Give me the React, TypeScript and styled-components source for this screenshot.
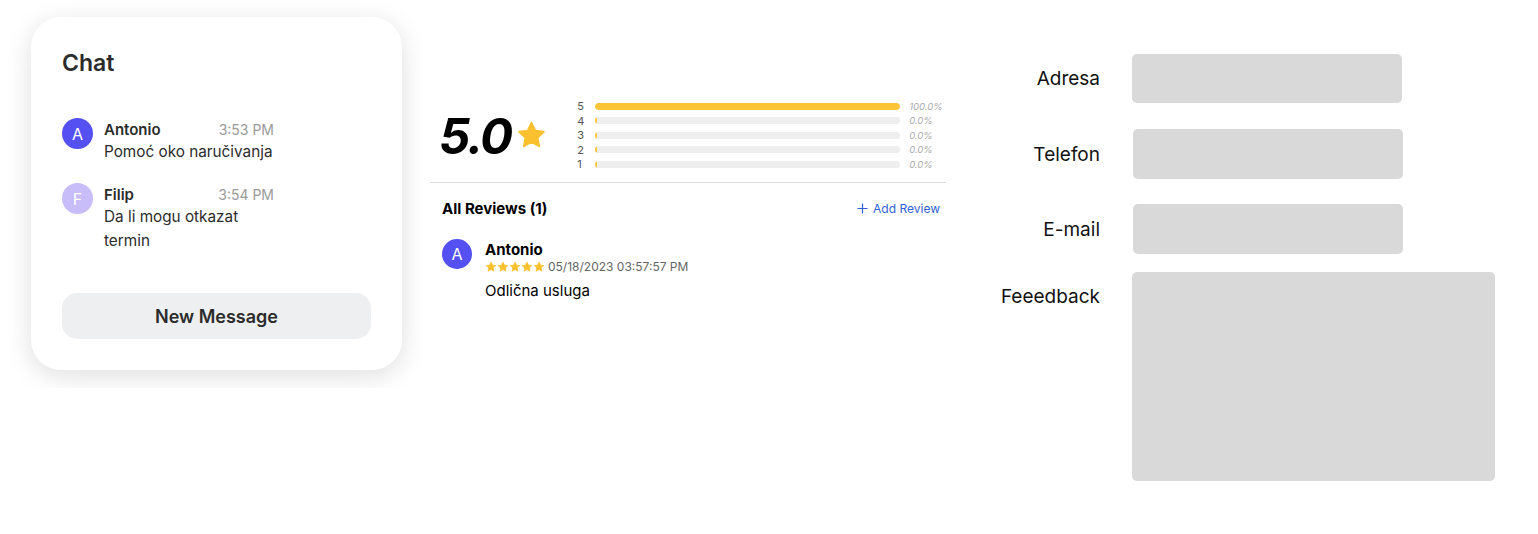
import React from "react";
import styled, { createGlobalStyle } from "styled-components";

const Global = createGlobalStyle`
  html, body { margin: 0; padding: 0; background: #ffffff; }
  body { font-family: Inter, "Noto Sans", sans-serif; color: #111; }
`;

const Page = styled.div`
  display: flex;
  align-items: flex-start;
  width: 1538px;
  height: 534px;
`;

/* ---------- Chat ---------- */
const ChatFrame = styled.div`
  width: 425px;
  height: 388px;
  overflow: hidden;
  padding: 17px 23px 0 31px;
  box-sizing: border-box;
  flex-shrink: 0;
`;

const ChatCard = styled.div`
  width: 371px;
  height: 353px;
  box-sizing: border-box;
  background: #fff;
  border-radius: 30px;
  box-shadow: 0 6px 26px rgba(0, 0, 0, 0.13);
  padding: 32px 31px 0 31px;
  display: flex;
  flex-direction: column;
`;

const ChatTitle = styled.h2`
  margin: 0;
  font-size: 23px;
  line-height: 28px;
  font-weight: 600;
  color: #2b2b2b;
`;

const MessageList = styled.div`
  display: flex;
  flex-direction: column;
  gap: 21px;
  margin-top: 43px;
`;

const MessageRow = styled.div`
  display: flex;
  gap: 11px;
`;

const Avatar = styled.div<{ $bg: string; $size?: number }>`
  width: ${(p) => p.$size ?? 31}px;
  height: ${(p) => p.$size ?? 31}px;
  border-radius: 50%;
  background: ${(p) => p.$bg};
  color: #fff;
  font-size: 16px;
  display: flex;
  align-items: center;
  justify-content: center;
  flex-shrink: 0;
  margin-top: -2px;
`;

const MessageBody = styled.div`
  width: 170px;
  display: flex;
  flex-direction: column;
`;

const MessageHead = styled.div`
  display: flex;
  justify-content: space-between;
  align-items: baseline;
  height: 20px;
`;

const SenderName = styled.span`
  font-size: 15px;
  font-weight: 600;
  color: #2b2b2b;
`;

const Time = styled.span`
  font-size: 14px;
  color: #9a9a9a;
`;

const MessageText = styled.div`
  font-size: 15.3px;
  line-height: 24px;
  color: #2b2b2b;
  white-space: pre-line;
`;

const NewMessageButton = styled.button`
  margin-top: auto;
  margin-bottom: 31px;
  height: 46px;
  border: none;
  border-radius: 15px;
  background: #eeeff1;
  font-family: Inter, sans-serif;
  font-size: 18px;
  font-weight: 600;
  color: #2b2b2b;
  cursor: pointer;
`;

/* ---------- Reviews ---------- */
const ReviewPanel = styled.div`
  width: 516px;
  margin-left: 5px;
  margin-top: 98px;
  flex-shrink: 0;
  font-family: Inter, sans-serif;
`;

const Summary = styled.div`
  display: flex;
  align-items: center;
  padding-left: 9px;
  height: 76px;
  border-bottom: 1px solid #dcdcdc;
  padding-bottom: 8px;
  box-sizing: content-box;
`;

const Score = styled.div`
  font-size: 49px;
  font-weight: 700;
  font-style: italic;
  letter-spacing: -2px;
  color: #000;
  line-height: 1;
`;

const BigStar = styled.svg`
  width: 31px;
  height: 31px;
  margin-left: 5px;
  margin-top: -2px;
`;

const Bars = styled.div`
  display: flex;
  flex-direction: column;
  margin-left: 30px;
  margin-top: -2px;
`;

const BarRow = styled.div`
  display: grid;
  grid-template-columns: 18px 305px auto;
  align-items: center;
  height: 14.5px;
`;

const BarLabel = styled.span`
  font-size: 11px;
  color: #555;
`;

const Track = styled.div`
  height: 7px;
  border-radius: 4px;
  background: #eeeeee;
  overflow: hidden;
`;

const Fill = styled.div`
  height: 100%;
  border-radius: 4px;
  background: #fbc537;
  min-width: 2px;
`;

const Percent = styled.span`
  font-size: 9.5px;
  font-style: italic;
  color: #aaa;
  margin-left: 9px;
`;

const ReviewsHeader = styled.div`
  display: flex;
  justify-content: space-between;
  align-items: center;
  padding: 16px 6px 0 12px;
`;

const ReviewsTitle = styled.span`
  font-size: 15px;
  font-weight: 700;
  color: #000;
`;

const AddReview = styled.span`
  font-size: 12px;
  color: #2e5fd6;
  display: flex;
  align-items: center;
  gap: 5px;
`;

const ReviewItem = styled.div`
  display: flex;
  gap: 13px;
  padding: 23px 0 0 12px;
`;

const ReviewBody = styled.div`
  display: flex;
  flex-direction: column;
`;

const ReviewName = styled.span`
  font-size: 15px;
  font-weight: 700;
  color: #000;
  line-height: 18px;
`;

const ReviewMeta = styled.div`
  display: flex;
  align-items: center;
  gap: 3px;
  font-size: 12px;
  color: #666;
  line-height: 16px;
`;

const SmallStars = styled.div`
  display: flex;
`;

const ReviewText = styled.div`
  font-size: 15px;
  color: #000;
  margin-top: 6px;
`;

/* ---------- Form ---------- */
const Form = styled.div`
  margin-left: 54px;
  margin-top: 54px;
  display: flex;
  flex-direction: column;
  font-family: Inter, sans-serif;
`;

const FormRow = styled.div<{ $mb: number; $top?: boolean }>`
  display: flex;
  align-items: ${(p) => (p.$top ? "flex-start" : "center")};
  gap: 32px;
  margin-bottom: ${(p) => p.$mb}px;
`;

const Label = styled.label<{ $top?: boolean }>`
  width: 100px;
  text-align: right;
  margin-top: ${(p) => (p.$top ? "13px" : "0")};
  font-size: 19px;
  color: #111;
`;

const Field = styled.div<{ $w: number; $h: number; $ml?: number }>`
  width: ${(p) => p.$w}px;
  height: ${(p) => p.$h}px;
  margin-left: ${(p) => p.$ml ?? 0}px;
  background: #d9d9d9;
  border-radius: 5px;
`;

const StarPath =
  "M12 2.2l2.9 6.1 6.6.8-4.9 4.6 1.3 6.6L12 17l-5.9 3.3 1.3-6.6-4.9-4.6 6.6-.8z";

const Star = ({ size, color }: { size: number; color: string }) => (
  <svg width={size} height={size} viewBox="0 0 24 24">
    <path d={StarPath} fill={color} stroke={color} strokeWidth={1.5} strokeLinejoin="round" />
  </svg>
);

const bars = [
  { label: "5", value: 100 },
  { label: "4", value: 0 },
  { label: "3", value: 0 },
  { label: "2", value: 0 },
  { label: "1", value: 0 },
];

export default function App() {
  return (
    <>
      <Global />
      <Page>
        <ChatFrame>
          <ChatCard>
            <ChatTitle>Chat</ChatTitle>
            <MessageList>
              <MessageRow>
                <Avatar $bg="#5450f2">A</Avatar>
                <MessageBody>
                  <MessageHead>
                    <SenderName>Antonio</SenderName>
                    <Time>3:53 PM</Time>
                  </MessageHead>
                  <MessageText>Pomoć oko naručivanja</MessageText>
                </MessageBody>
              </MessageRow>
              <MessageRow>
                <Avatar $bg="#c8bcf9">F</Avatar>
                <MessageBody>
                  <MessageHead>
                    <SenderName>Filip</SenderName>
                    <Time>3:54 PM</Time>
                  </MessageHead>
                  <MessageText>{"Da li mogu otkazat\ntermin"}</MessageText>
                </MessageBody>
              </MessageRow>
            </MessageList>
            <NewMessageButton>New Message</NewMessageButton>
          </ChatCard>
        </ChatFrame>

        <ReviewPanel>
          <Summary>
            <Score>5.0</Score>
            <BigStar viewBox="0 0 24 24">
              <path d={StarPath} fill="#fbc02d" stroke="#fbc02d" strokeWidth={1.5} strokeLinejoin="round" />
            </BigStar>
            <Bars>
              {bars.map((b) => (
                <BarRow key={b.label}>
                  <BarLabel>{b.label}</BarLabel>
                  <Track>
                    <Fill style={{ width: `${b.value}%` }} />
                  </Track>
                  <Percent>{b.value.toFixed(1)}%</Percent>
                </BarRow>
              ))}
            </Bars>
          </Summary>
          <ReviewsHeader>
            <ReviewsTitle>All Reviews (1)</ReviewsTitle>
            <AddReview>
              <svg width="11" height="11" viewBox="0 0 11 11">
                <path d="M5.5 0.5v10M0.5 5.5h10" stroke="#2e5fd6" strokeWidth="1.2" />
              </svg>
              Add Review
            </AddReview>
          </ReviewsHeader>
          <ReviewItem>
            <Avatar $bg="#5450f2" $size={30}>A</Avatar>
            <ReviewBody>
              <ReviewName>Antonio</ReviewName>
              <ReviewMeta>
                <SmallStars>
                  {[0, 1, 2, 3, 4].map((i) => (
                    <Star key={i} size={12} color="#fbc02d" />
                  ))}
                </SmallStars>
                05/18/2023 03:57:57 PM
              </ReviewMeta>
              <ReviewText>Odlična usluga</ReviewText>
            </ReviewBody>
          </ReviewItem>
        </ReviewPanel>

        <Form>
          <FormRow $mb={26}>
            <Label>Adresa</Label>
            <Field $w={270} $h={49} />
          </FormRow>
          <FormRow $mb={25}>
            <Label>Telefon</Label>
            <Field $w={270} $h={50} $ml={1} />
          </FormRow>
          <FormRow $mb={18}>
            <Label>E-mail</Label>
            <Field $w={270} $h={50} $ml={1} />
          </FormRow>
          <FormRow $mb={0} $top>
            <Label $top>Feeedback</Label>
            <Field $w={363} $h={209} />
          </FormRow>
        </Form>
      </Page>
    </>
  );
}
